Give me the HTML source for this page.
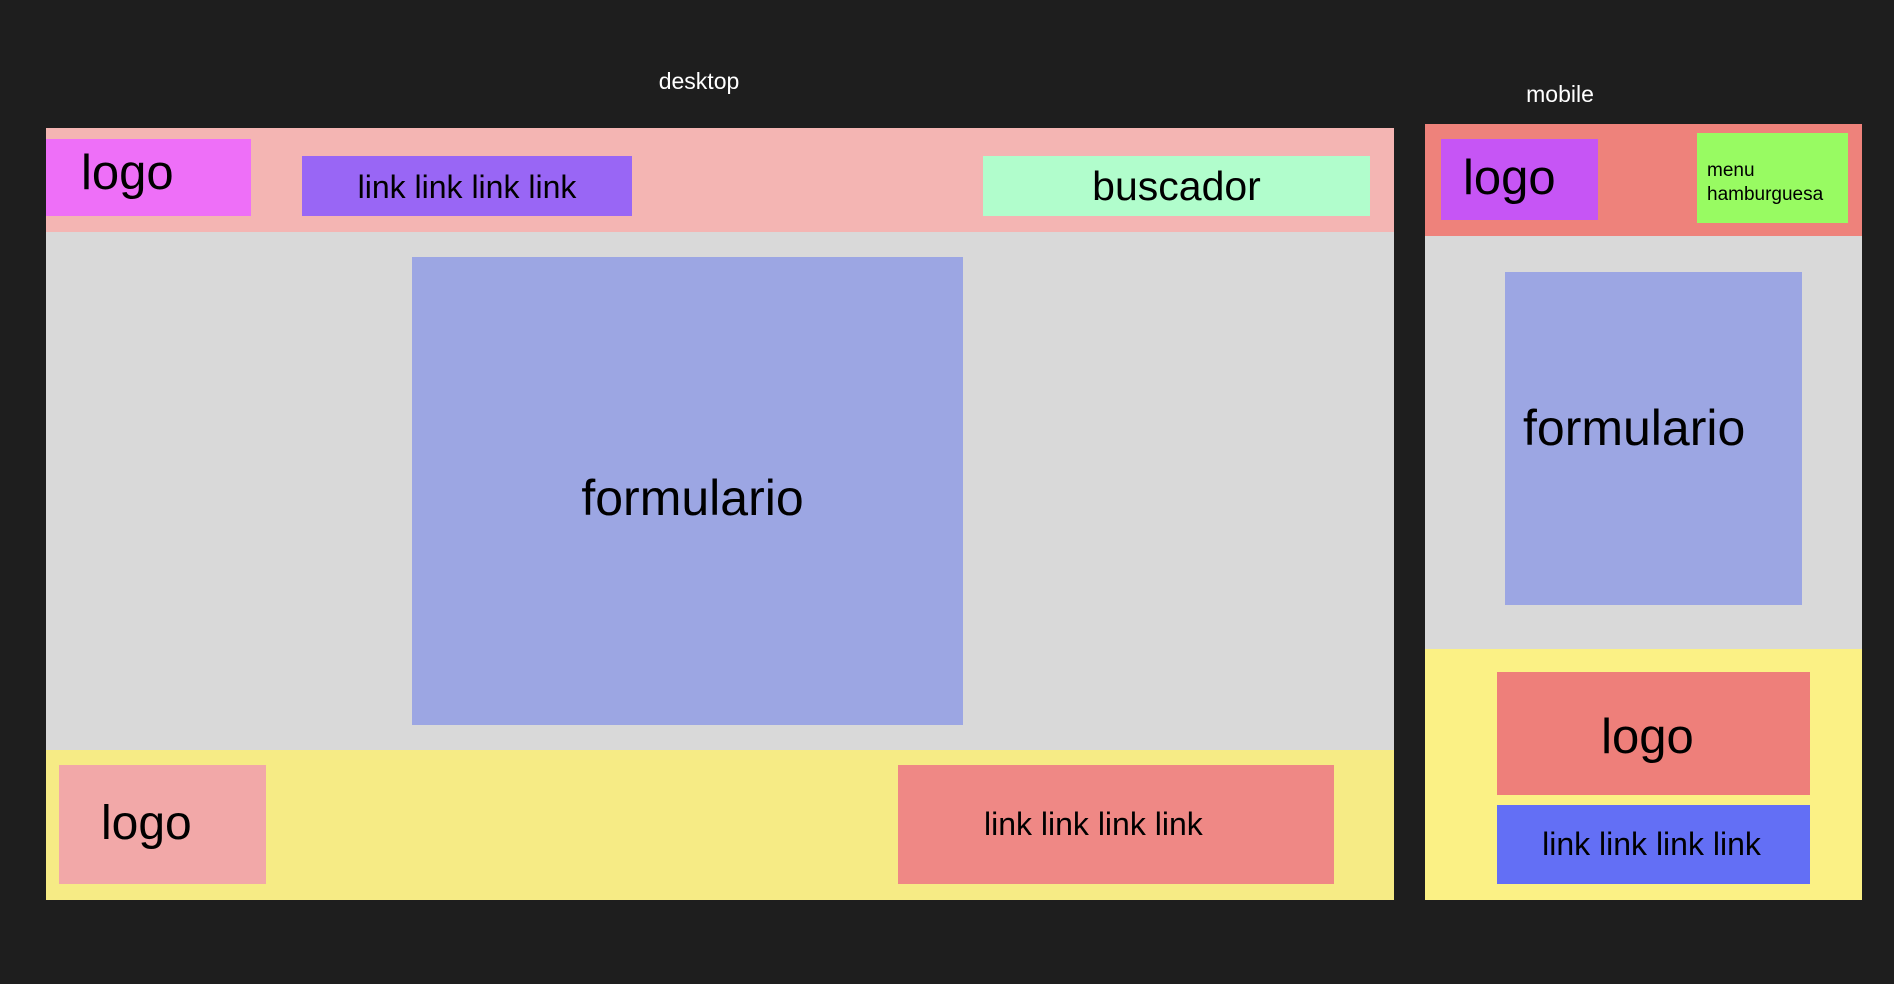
<!DOCTYPE html>
<html><head><meta charset="utf-8"><style>
body{margin:0;width:1894px;height:984px;background:#1e1e1e;position:relative;overflow:hidden;font-family:"Liberation Sans",sans-serif;color:#000}
div{position:absolute;box-sizing:border-box}
.c{display:flex;align-items:center;justify-content:center}
.lbl{color:#fff;font-size:23px;transform:translateX(-50%)}
</style></head><body>
<div class="lbl" style="left:699px;top:68px">desktop</div>
<div class="lbl" style="left:1560px;top:81px">mobile</div>

<div style="left:46px;top:128px;width:1348px;height:104px;background:#f4b5b3"></div>
<div style="left:46px;top:139px;width:205px;height:77px;background:#ee6ff8;font-size:49px;padding-left:35px;line-height:68px">logo</div>
<div class="c" style="left:302px;top:156px;width:330px;height:60px;background:#9966f5;font-size:32px;padding-top:2px">link link link link</div>
<div class="c" style="left:983px;top:156px;width:387px;height:60px;background:#b1fdcc;font-size:41px">buscador</div>
<div style="left:46px;top:232px;width:1348px;height:518px;background:#d9d9d9"></div>
<div class="c" style="left:412px;top:257px;width:551px;height:468px;background:#9ca6e3;font-size:50px;padding-left:10px;padding-top:14px">formulario</div>
<div style="left:46px;top:750px;width:1348px;height:150px;background:#f6eb85"></div>
<div style="left:59px;top:765px;width:207px;height:119px;background:#f2a8a8;font-size:48px;padding-left:42px;line-height:117px">logo</div>
<div style="left:898px;top:765px;width:436px;height:119px;background:#ef8885;font-size:32px;padding-left:86px;line-height:119px">link link link link</div>

<div style="left:1425px;top:124px;width:437px;height:112px;background:#ee827b"></div>
<div style="left:1441px;top:139px;width:157px;height:81px;background:#c655f5;font-size:49px;padding-left:22px;line-height:78px">logo</div>
<div style="left:1697px;top:133px;width:151px;height:90px;background:#98fb62;font-size:19px;padding:26px 0 0 10px;line-height:24px">menu<br>hamburguesa</div>
<div style="left:1425px;top:236px;width:437px;height:413px;background:#d9d9d9"></div>
<div style="left:1505px;top:272px;width:297px;height:333px;background:#9ca6e3"></div>
<div style="left:1523px;top:399px;font-size:50px">formulario</div>
<div style="left:1425px;top:649px;width:437px;height:251px;background:#fbf185"></div>
<div class="c" style="left:1497px;top:672px;width:313px;height:123px;background:#ee7f7a;font-size:49px;padding-top:6px;padding-right:12px">logo</div>
<div class="c" style="left:1497px;top:805px;width:313px;height:79px;background:#636ff5;font-size:32px;padding-right:4px">link link link link</div>
</body></html>
